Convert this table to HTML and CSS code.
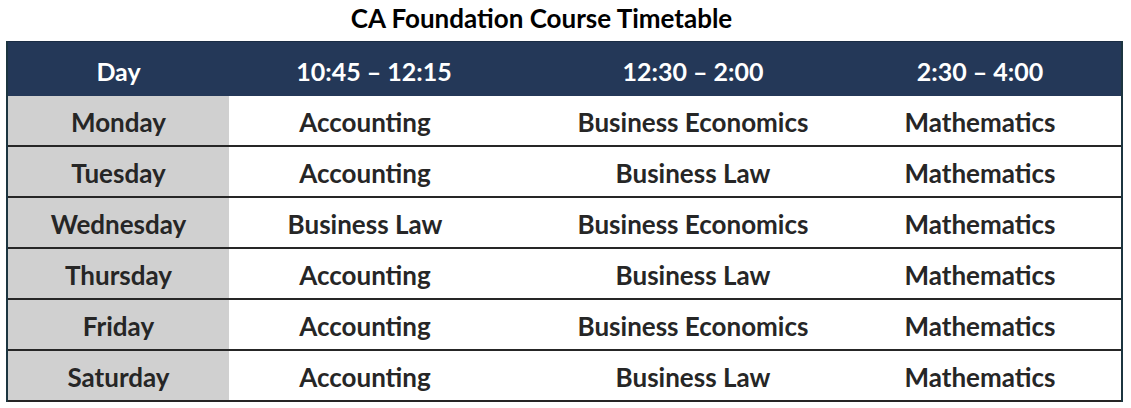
FILE: index.html
```html
<!DOCTYPE html>
<html lang="en">
<head>
<meta charset="utf-8">
<title>CA Foundation Course Timetable</title>
<link rel="stylesheet" href="styles.css">
</head>
<body>
<div class="page">
  <h1 class="title">CA Foundation Course Timetable</h1>
  <div class="timetable">
    <div class="row head">
      <div class="cell day">Day</div>
      <div class="cell c2">10:45 – 12:15</div>
      <div class="cell c3">12:30 – 2:00</div>
      <div class="cell c4">2:30 – 4:00</div>
    </div>
    <div class="row">
      <div class="cell day">Monday</div>
      <div class="cell c2">Accounting</div>
      <div class="cell c3">Business Economics</div>
      <div class="cell c4">Mathematics</div>
    </div>
    <div class="row">
      <div class="cell day">Tuesday</div>
      <div class="cell c2">Accounting</div>
      <div class="cell c3">Business Law</div>
      <div class="cell c4">Mathematics</div>
    </div>
    <div class="row">
      <div class="cell day">Wednesday</div>
      <div class="cell c2">Business Law</div>
      <div class="cell c3">Business Economics</div>
      <div class="cell c4">Mathematics</div>
    </div>
    <div class="row">
      <div class="cell day">Thursday</div>
      <div class="cell c2">Accounting</div>
      <div class="cell c3">Business Law</div>
      <div class="cell c4">Mathematics</div>
    </div>
    <div class="row">
      <div class="cell day">Friday</div>
      <div class="cell c2">Accounting</div>
      <div class="cell c3">Business Economics</div>
      <div class="cell c4">Mathematics</div>
    </div>
    <div class="row">
      <div class="cell day">Saturday</div>
      <div class="cell c2">Accounting</div>
      <div class="cell c3">Business Law</div>
      <div class="cell c4">Mathematics</div>
    </div>
  </div>
</div>
</body>
</html>
```
FILE: styles.css
```css
html, body {
  margin: 0;
  padding: 0;
  background: #ffffff;
}

body {
  font-family: Lato, "Open Sans", "Liberation Sans", sans-serif;
  font-weight: 700;
  color: #262626;
}

.page {
  width: 1131px;
  padding-top: 4px;
}

.title {
  margin: 0;
  font-size: 26px;
  line-height: 28px;
  font-weight: 700;
  text-align: center;
  color: #000000;
  height: 37px;
  padding-right: 48px;
}

.timetable {
  margin-left: 6px;
  width: 1117px;
  border-left: 2px solid #1c3540;
  border-right: 2px solid #1c3540;
  box-sizing: border-box;
}

.row {
  display: grid;
  grid-template-columns: 221px 272px 384px 1fr;
  height: 51px;
  border-bottom: 2px solid #262626;
  box-sizing: border-box;
}

.row.head {
  height: 55px;
  background: #243858;
  color: #ffffff;
  border-top: 1px solid #1a2c44;
  border-bottom: none;
}

.cell {
  display: flex;
  align-items: center;
  justify-content: center;
  font-size: 26px;
  padding-top: 3px;
}

.row.head .cell {
  font-size: 25px;
}

.row .day {
  background: #d0d0d0;
}

.row.head .day {
  background: transparent;
}

.row.head .c2 {
  padding-left: 18px;
}

.c4 {
  padding-right: 46px;
}
```
